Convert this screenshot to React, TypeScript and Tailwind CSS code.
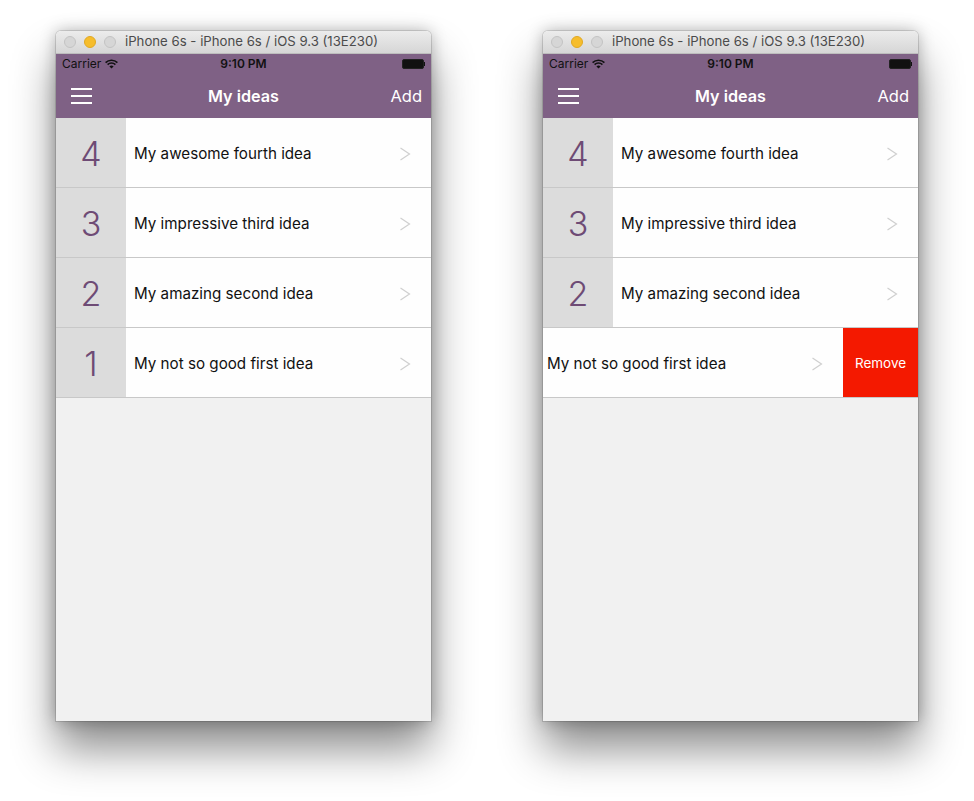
import React from 'react';

const ideas = [
  { n: 4, text: 'My awesome fourth idea' },
  { n: 3, text: 'My impressive third idea' },
  { n: 2, text: 'My amazing second idea' },
  { n: 1, text: 'My not so good first idea' },
];

const Wifi = () => (
  <svg width="13" height="10" viewBox="0 0 13 10" className="ml-[4px]">
    <path d="M0.6 3.6 A8.5 8.5 0 0 1 12.4 3.6" stroke="#111" strokeWidth="1.6" fill="none" />
    <path d="M2.6 5.6 A5.6 5.6 0 0 1 10.4 5.6" stroke="#111" strokeWidth="1.6" fill="none" />
    <path d="M6.5 9.6 L4.4 7.5 A3 3 0 0 1 8.6 7.5 Z" fill="#111" />
  </svg>
);

const Battery = () => (
  <div className="flex items-center">
    <div className="w-[22px] h-[10px] rounded-[2px] bg-[#111] border border-[#222]" />
    <div className="w-[1.5px] h-[4px] bg-[#111]" />
  </div>
);

const Chevron = () => (
  <svg width="12" height="16" viewBox="0 0 12 16">
    <path d="M1.5 2 L10.5 8 L1.5 14" stroke="#cfcfcf" strokeWidth="1.2" fill="none" />
  </svg>
);

const Row = ({ n, text }: { n: number; text: string }) => (
  <div className="h-[70px] flex border-b border-[#c8c8c8] bg-[#fefefe]">
    <div className="w-[70px] bg-[#dcdcdc] flex items-center justify-center pt-[2px] text-[34px] font-light text-[#6e4b75]">
      {n}
    </div>
    <div className="flex-1 flex items-center pl-[8px] pr-[20px] pt-[3px] text-[15.2px] text-[#111]">
      <span className="flex-1">{text}</span>
      <Chevron />
    </div>
  </div>
);

const SwipedRow = ({ text }: { text: string }) => (
  <div className="h-[70px] flex border-b border-[#c8c8c8] bg-[#fefefe]">
    <div className="flex-1 flex items-center pl-[4px] pr-[20px] pt-[3px] text-[15.2px] text-[#111]">
      <span className="flex-1">{text}</span>
      <Chevron />
    </div>
    <div className="w-[75px] bg-[#f41900] flex items-center justify-center pt-[2px] text-[13.5px] text-white">
      Remove
    </div>
  </div>
);

const Phone = ({ swiped }: { swiped: boolean }) => (
  <div className="w-[375px] rounded-t-[5px] overflow-hidden shadow-[0_0_0_1px_rgba(0,0,0,0.12),0_28px_44px_rgba(0,0,0,0.45),0_0_16px_rgba(0,0,0,0.28)]">
    <div className="h-[23px] bg-gradient-to-b from-[#ececec] to-[#d6d6d6] border-b border-[#bdbdbd] flex items-center px-[8px]">
      <div className="flex gap-[8px]">
        <span className="w-[12px] h-[12px] rounded-full bg-[#d6d6d6] border border-[#c3c3c3]" />
        <span className="w-[12px] h-[12px] rounded-full bg-[#f6bd2c] border border-[#e0a823]" />
        <span className="w-[12px] h-[12px] rounded-full bg-[#d6d6d6] border border-[#c3c3c3]" />
      </div>
      <span className="ml-[9px] text-[13.2px] text-[#4b4b4b]">iPhone 6s - iPhone 6s / iOS 9.3 (13E230)</span>
    </div>
    <div className="h-[667px] bg-[#f1f1f1] flex flex-col">
      <div className="bg-[#7f6185]">
        <div className="h-[20px] relative flex items-center justify-between px-[6px] text-[12px] text-[#111]">
          <div className="flex items-center">
            <span>Carrier</span>
            <Wifi />
          </div>
          <span className="absolute left-1/2 -translate-x-1/2 font-semibold">9:10 PM</span>
          <Battery />
        </div>
        <div className="h-[44px] relative flex items-center justify-between pl-[15px] pr-[9px] text-white">
          <div className="flex flex-col gap-[5px]">
            <span className="w-[21px] h-[2px] bg-white" />
            <span className="w-[21px] h-[2px] bg-white" />
            <span className="w-[21px] h-[2px] bg-white" />
          </div>
          <span className="absolute left-1/2 -translate-x-1/2 text-[16.2px] font-semibold">My ideas</span>
          <span className="text-[16.5px]">Add</span>
        </div>
      </div>
      {ideas.map((i) =>
        swiped && i.n === 1 ? <SwipedRow key={i.n} text={i.text} /> : <Row key={i.n} n={i.n} text={i.text} />
      )}
    </div>
  </div>
);

export default function App() {
  return (
    <div className="w-[974px] h-[801px] bg-white flex items-start justify-center gap-[112px] pt-[31px] font-['Inter',sans-serif] overflow-hidden">
      <Phone swiped={false} />
      <Phone swiped={true} />
    </div>
  );
}
